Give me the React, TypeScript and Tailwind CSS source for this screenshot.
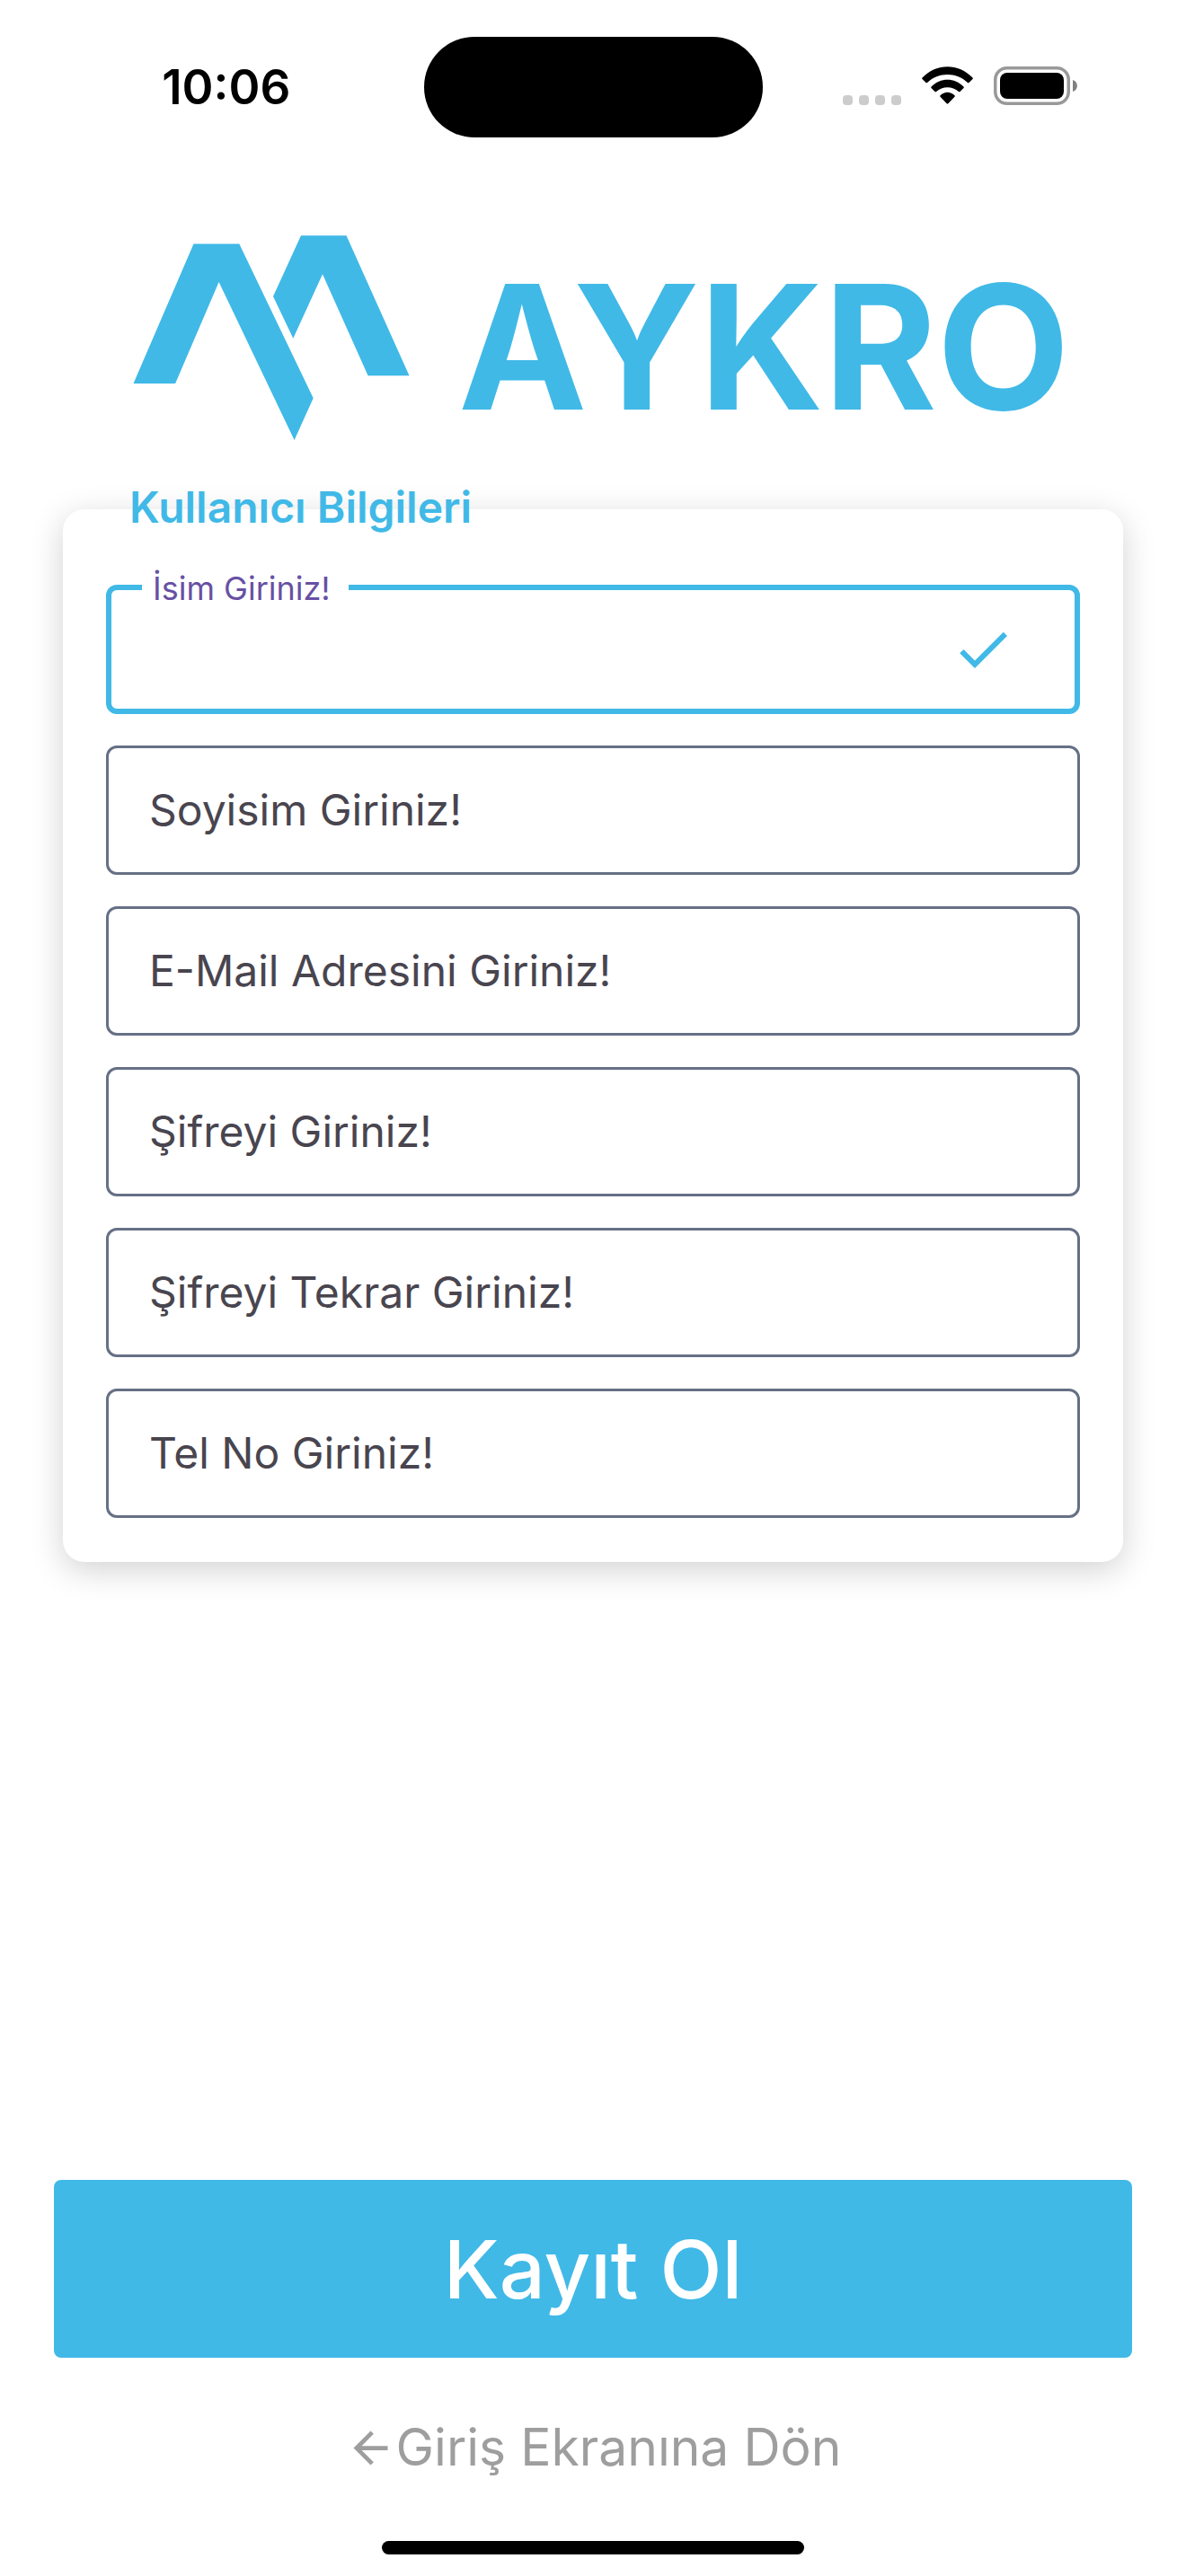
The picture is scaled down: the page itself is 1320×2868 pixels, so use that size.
import { useState } from "react"
import { MdArrowBack, MdCheck } from "react-icons/md"

const fields = [
    { id: "isim", label: "İsim Giriniz!", type: "text" },
    { id: "soyisim", label: "Soyisim Giriniz!", type: "text" },
    { id: "email", label: "E-Mail Adresini Giriniz!", type: "email" },
    { id: "sifre", label: "Şifreyi Giriniz!", type: "password" },
    { id: "sifre-tekrar", label: "Şifreyi Tekrar Giriniz!", type: "password" },
    { id: "tel", label: "Tel No Giriniz!", type: "tel" },
]

function StatusBar() {
    return (
        <div className="grid grid-cols-[1fr_377px_1fr] items-center pt-[41px]">
            <span className="pl-8 text-center text-[53px] leading-none font-semibold text-black">10:06</span>
            <div className="h-28 rounded-full bg-black" />
            <div className="flex items-end justify-end pr-[121px] pb-1">
                <div className="flex gap-[7px]">
                    <span className="size-[11px] rounded-[4px] bg-[#cccccc]" />
                    <span className="size-[11px] rounded-[4px] bg-[#cccccc]" />
                    <span className="size-[11px] rounded-[4px] bg-[#cccccc]" />
                    <span className="size-[11px] rounded-[4px] bg-[#cccccc]" />
                </div>
                <svg className="ml-[23px] h-[43px] w-[57px]" viewBox="0 0 57 43" fill="black" aria-hidden="true">
                    <path d="M0.500 12.500C16 -4 41 -4 56.500 12.500Q57.300 13.300 56.500 14L52.500 18Q51.700 18.600 51 18C38.500 6 18.500 6 6 18Q5.300 18.600 4.500 18L0.500 14Q-0.300 13.300 0.500 12.500Z" />
                    <path d="M10.500 22.500C20.500 12 36.500 12 46.500 22.500Q47.200 23.300 46.500 24L42.500 28Q41.700 28.700 41 28C34 21.500 23 21.500 16 28Q15.300 28.700 14.500 28L10.500 24Q9.800 23.300 10.500 22.500Z" />
                    <path d="M20.500 32.300C25 27.500 32 27.500 36.500 32.300Q37.200 33 36.500 33.800L29.300 41.300Q28.500 42 27.700 41.300L20.500 33.800Q19.800 33 20.500 32.300Z" />
                </svg>
                <svg className="ml-[23px] h-[43px] w-[93px]" viewBox="0 0 93 43" aria-hidden="true">
                    <rect x="1.750" y="1.750" width="81.500" height="39.500" rx="13" fill="none" stroke="#999999" strokeWidth="3.500" />
                    <rect x="7" y="7" width="71" height="29" rx="8" fill="black" />
                    <path d="M88 15C94.500 17 94.500 26 88 28Z" fill="#808080" />
                </svg>
            </div>
        </div>
    )
}

function Logo() {
    return (
        <header className="mt-[109px] flex items-end gap-[54px] pl-[148px] text-[#40b9e7]">
            <svg className="h-[228px] w-[308px] shrink-0" viewBox="0 0 308 228" fill="currentColor" aria-hidden="true">
                <path d="M67.500 9.500H118.300L200.700 181.300L179.600 228L95.600 52L47.100 165H0.500Z" />
                <path d="M187 0.300H237.500L307.500 156.300H261.600L211 43.300L178.300 114.700L156 68Z" />
            </svg>
            <h1 className="pb-2 text-[192px] leading-none font-bold">AYKRO</h1>
        </header>
    )
}

export default function App() {
    const [active, setActive] = useState("isim")
    const [values, setValues] = useState<Record<string, string>>({})

    return (
        <div className="flex min-h-screen flex-col bg-white font-['Inter',sans-serif]">
            <StatusBar />
            <Logo />
            <form className="flex grow flex-col" onSubmit={(e) => e.preventDefault()}>
                <h2 className="z-10 mt-[49px] -mb-6 pl-36 text-[48px] leading-[52px] font-semibold text-[#40b9e7]">
                    Kullanıcı Bilgileri
                </h2>
                <div className="mx-[70px] flex flex-col gap-[35px] rounded-3xl bg-white px-12 pt-[84px] pb-[49px] shadow-[0_9px_36px_rgba(0,0,0,0.18)]">
                    {fields.map(({ id, label, type }) => {
                        const focused = active === id
                        const raised = focused || Boolean(values[id])
                        return (
                            <div key={id} className="relative flex items-center">
                                <input
                                    id={id}
                                    type={type}
                                    value={values[id] ?? ""}
                                    onFocus={() => setActive(id)}
                                    onChange={(e) => setValues({ ...values, [id]: e.target.value })}
                                    className={
                                        focused
                                            ? "h-36 w-full rounded-xl border-6 border-[#40b9e7] pr-40 pl-11 text-[48px] outline-none"
                                            : "h-36 w-full rounded-xl border-3 border-[#667085] px-12 text-[48px] outline-none"
                                    }
                                />
                                <label
                                    htmlFor={id}
                                    className={
                                        raised
                                            ? "absolute -top-5 left-10 bg-white pr-5 pl-3 text-[36px] leading-[48px] text-[#6750a4]"
                                            : "absolute left-12 text-[48px] leading-[56px] text-[#49454f]"
                                    }
                                >
                                    {label}
                                </label>
                                {focused && <MdCheck className="absolute right-[72px] size-[72px] text-[#40b9e7]" />}
                            </div>
                        )
                    })}
                </div>
                <button
                    type="submit"
                    className="mx-[60px] mt-auto h-[198px] rounded-lg bg-[#40b9e7] text-[90px] font-medium text-white"
                >
                    Kayıt Ol
                </button>
            </form>
            <a href="#giris" className="mt-16 flex items-center justify-center text-[57px] leading-[72px] text-[#9e9e9e]">
                <MdArrowBack className="size-[57px]" />
                Giriş Ekranına Dön
            </a>
            <div className="mx-auto mt-[68px] mb-6 h-[15px] w-[470px] rounded-full bg-black" />
        </div>
    )
}
